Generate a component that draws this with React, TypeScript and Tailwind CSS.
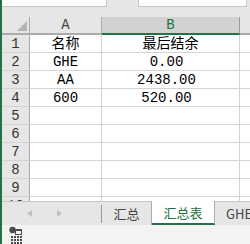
import React from "react";

type Row = { label: string; a: string; b: string; num?: boolean };

const rows: Row[] = [
  { label: "1", a: "名称", b: "最后结余" },
  { label: "2", a: "GHE", b: "0.00", num: true },
  { label: "3", a: "AA", b: "2438.00", num: true },
  { label: "4", a: "600", b: "520.00", num: true },
  { label: "5", a: "", b: "" },
  { label: "6", a: "", b: "" },
  { label: "7", a: "", b: "" },
  { label: "8", a: "", b: "" },
  { label: "9", a: "", b: "" },
  { label: "10", a: "", b: "" },
];

const cellFont = "font-['Liberation_Mono','Noto_Sans_CJK_SC',monospace]";

const SheetRow: React.FC<{ row: Row }> = ({ row }) => (
  <div className="flex h-[18px] shrink-0">
    <div className="w-[28px] shrink-0 flex items-center justify-center bg-[#e6e6e6] border-r border-r-[#ababab] border-b border-b-[#d4d4d4] text-[14px] leading-none text-[#333]">
      {row.label}
    </div>
    <div className="w-[72px] shrink-0 flex items-center justify-center bg-white border-r border-b border-[#d4d4d4] text-[14px] leading-none text-black">
      {row.a}
    </div>
    <div
      className={`w-[138px] shrink-0 flex items-center justify-center bg-white border-r border-b border-[#d4d4d4] text-[14px] leading-none text-black ${
        row.num ? "pr-[8px]" : ""
      }`}
    >
      {row.b}
    </div>
    <div className="flex-1 bg-white border-b border-[#d4d4d4]" />
  </div>
);

export default function App() {
  return (
    <div
      className={`w-[250px] h-[244px] overflow-hidden flex flex-col bg-[#e6e6e6] border-l-2 border-[#217346] ${cellFont}`}
    >
      {/* formula bar (cut off) */}
      <div className="h-[17px] shrink-0 flex items-start">
        <div className="w-[105px] h-[7px] bg-white border-r border-b border-[#c6c6c6]" />
        <div className="ml-[31px] w-[109px] h-[7px] bg-white border-x border-b border-[#c6c6c6]" />
      </div>

      {/* column headers */}
      <div className="h-[18px] shrink-0 flex">
        <div className="w-[28px] shrink-0 flex items-end justify-end pr-[2px] pb-[2px] border-r border-r-[#ababab] border-b-2 border-b-[#ababab]">
          <svg width="10" height="10" viewBox="0 0 10 10">
            <polygon points="10,0 10,10 0,10" fill="#b4b4b4" />
          </svg>
        </div>
        <div className="w-[72px] shrink-0 flex items-center justify-center border-r border-r-[#ababab] border-b-2 border-b-[#ababab] text-[14px] leading-none text-[#444]">
          A
        </div>
        <div className="w-[138px] shrink-0 flex items-center justify-center bg-[#d2d2d2] border-r border-r-[#9b9b9b] border-b-2 border-b-[#217346] text-[14px] leading-none text-[#217346]">
          B
        </div>
        <div className="flex-1 border-b-2 border-b-[#ababab]" />
      </div>

      {/* grid */}
      <div className="h-[166px] shrink-0 overflow-hidden flex flex-col">
        {rows.map((r) => (
          <SheetRow key={r.label} row={r} />
        ))}
      </div>

      {/* sheet tabs */}
      <div className="h-[24px] shrink-0 flex font-['Noto_Sans_CJK_SC',sans-serif] text-[13px] leading-none">
        <div className="w-[99px] shrink-0 flex items-center border-t border-[#c6c6c6] pl-[25px]">
          <svg width="5" height="7" viewBox="0 0 5 7">
            <polygon points="5,0 5,7 0,3.5" fill="#bfbfbf" />
          </svg>
          <svg width="5" height="7" viewBox="0 0 5 7" className="ml-[25px]">
            <polygon points="0,0 0,7 5,3.5" fill="#bfbfbf" />
          </svg>
        </div>
        <div className="w-px shrink-0 border-t border-[#c6c6c6] flex flex-col">
          <div className="h-[3px]" />
          <div className="h-[18px] bg-[#9b9b9b]" />
        </div>
        <div className="w-[50px] shrink-0 flex items-center justify-center border-t border-t-[#c6c6c6] border-r border-r-[#ababab] text-[#444]">
          汇总
        </div>
        <div className="w-[63px] shrink-0 flex items-center justify-center bg-white border-r border-r-[#ababab] border-b-2 border-b-[#217346] text-[#217346]">
          汇总表
        </div>
        <div className="flex-1 flex items-center pl-[11px] border-t border-[#c6c6c6] text-[#444] whitespace-nowrap">
          GHE
        </div>
      </div>

      {/* status bar */}
      <div className="flex-1 bg-[#f3f3f3] flex items-start">
        <svg width="14" height="18" viewBox="0 0 14 18" className="ml-[7px] mt-[1px]">
          <rect x="6.5" y="3.5" width="6" height="5" fill="none" stroke="#4a4a4a" />
          <rect x="6" y="3" width="7" height="2" fill="#4a4a4a" />
          <circle cx="3.5" cy="4" r="3.2" fill="#4a4a4a" />
          {[10, 13, 16].map((y) =>
            [2, 5, 8, 11].map((x) => (
              <rect key={`${x}-${y}`} x={x} y={y} width="2" height="2" fill="#4a4a4a" />
            ))
          )}
        </svg>
      </div>
    </div>
  );
}
